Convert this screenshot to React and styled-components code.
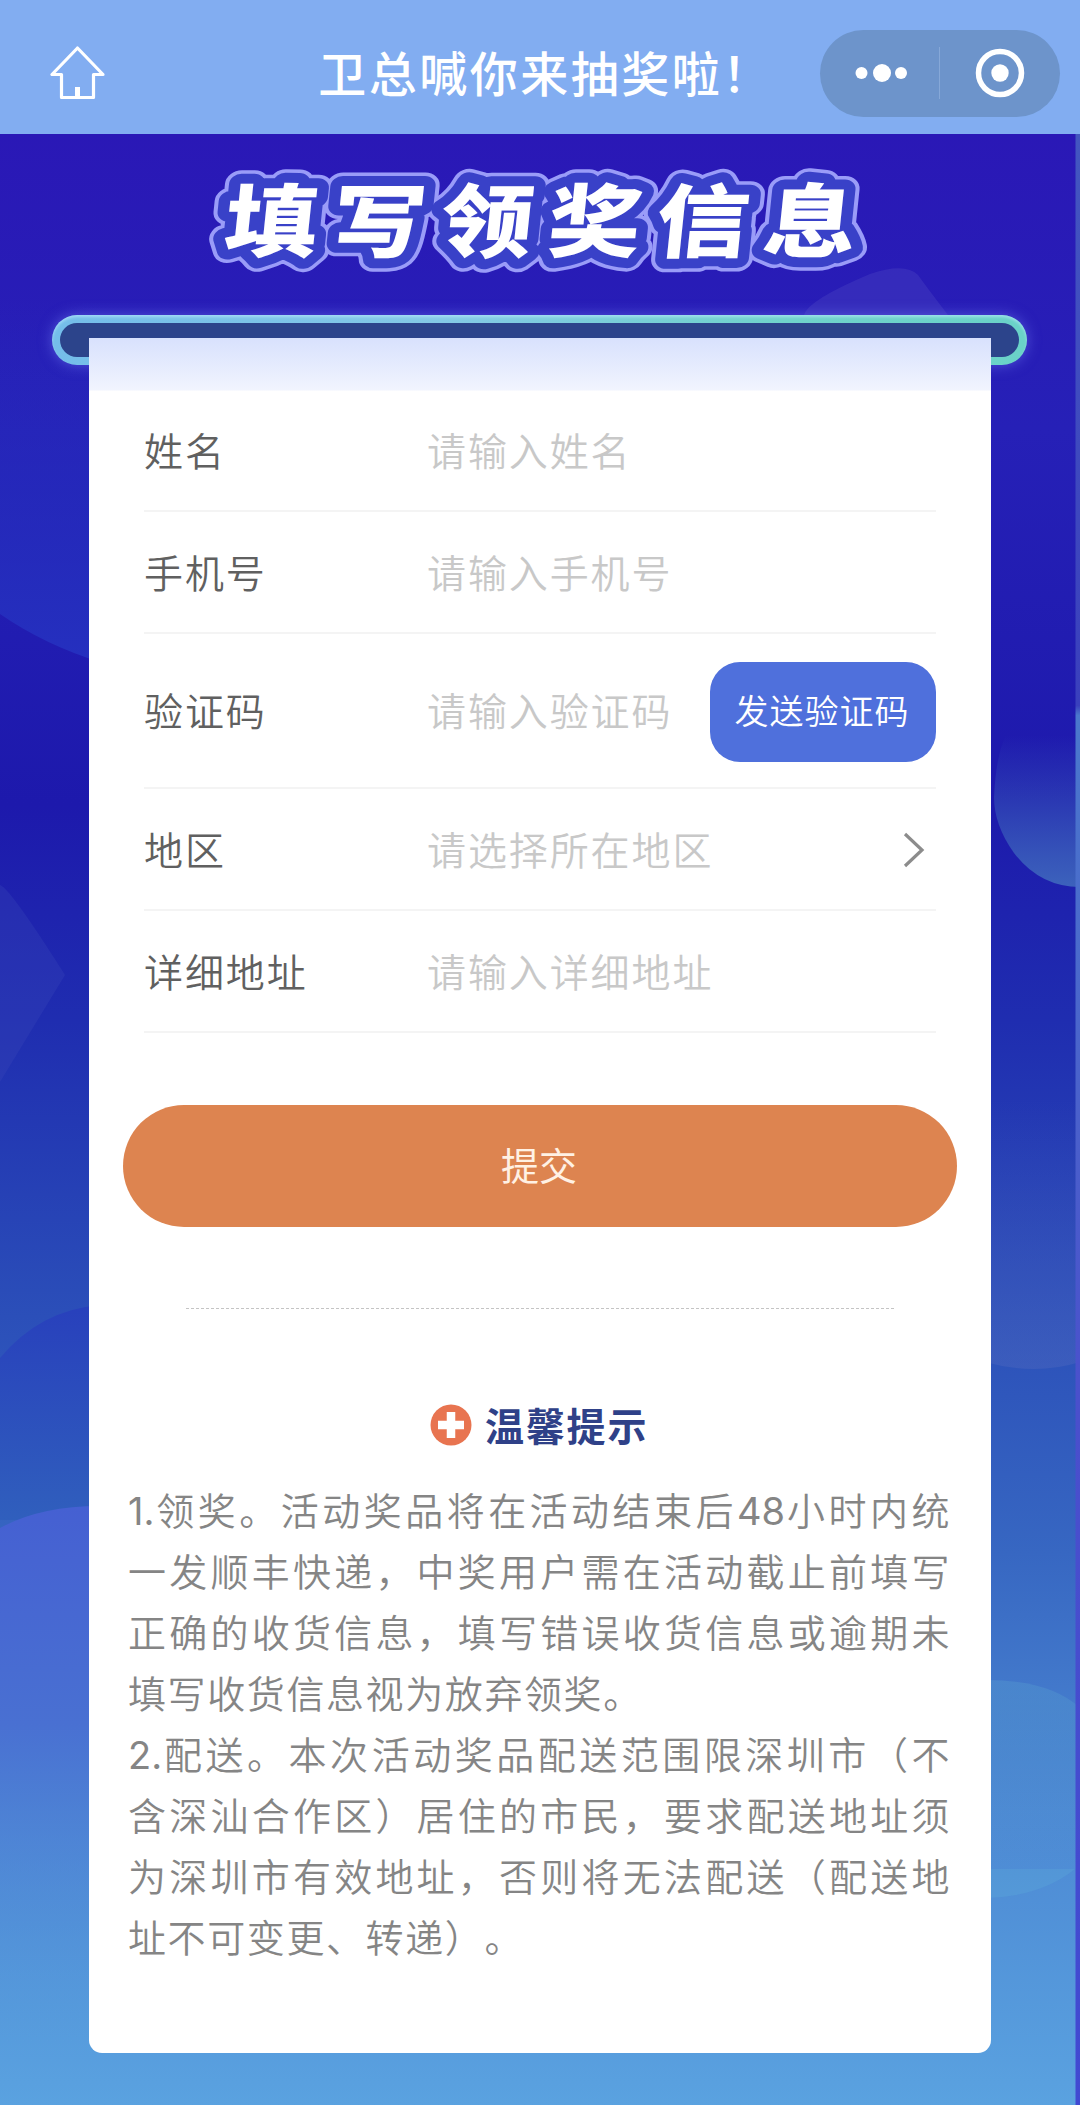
import React from 'react';
import styled, { createGlobalStyle } from 'styled-components';

const GlobalStyle = createGlobalStyle`
    body {
        margin : 0;
        font-family : "Noto Sans CJK SC", sans-serif;
    }

    * {
        box-sizing : border-box;
    }
`;

const Page = styled.div`
    position : relative;
    width : 1080px;
    height : 2105px;
    overflow : hidden;
    background : #2a1ab6;
`;

const Backdrop = styled.svg`
    position : absolute;
    top : 134px;
    left : 0;
`;

const Header = styled.header`
    position : relative;
    display : flex;
    align-items : center;
    justify-content : space-between;
    height : 134px;
    padding : 12px 20px 0 50px;
    background : #82adf1;
`;

const HeaderTitle = styled.h1`
    margin : 0 0 4px 166px;
    color : white;
    font-size : 48px;
    font-weight : 500;
    line-height : 60px;
    letter-spacing : 2.5px;
    white-space : nowrap;
`;

const Capsule = styled.div`
    display : flex;
    align-items : center;
    width : 240px;
    height : 87px;
    border-radius : 44px;
    background : #6d94cb;
`;

const CapsuleHalf = styled.div`
    display : flex;
    flex : 1;
    align-items : center;
    justify-content : center;
    height : 52px;
`;

const CapsuleLine = styled.div`
    width : 1px;
    height : 52px;
    background : #86a8d8;
`;

const Banner = styled.svg`
    position : relative;
    display : block;
    width : 1080px;
    height : 181px;
`;

const Slot = styled.div`
    position : relative;
    width : 975px;
    height : 50px;
    margin-left : 52px;
    padding : 8px;
    border-radius : 25px;
    background : linear-gradient(90deg, #74bdea 0%, #84c9e6 40%, #70d3cb 75%, #6ad2c8 100%);
    box-shadow : 0 0 14px rgba(110, 120, 240, .6), inset 0 2px 3px rgba(190, 235, 255, .6);

    &::after {
        content : "";
        display : block;
        height : 34px;
        border-radius : 17px;
        background : #2c448b;
    }
`;

const Card = styled.main`
    position : relative;
    display : flex;
    flex-direction : column;
    width : 902px;
    height : 1715px;
    margin : -27px 0 0 89px;
    padding-top : 52px;
    border-radius : 0 0 13px 13px;
    background : linear-gradient(180deg, #d8e1fd 0px, #f1f4fe 52px, white 53px);
`;

const Form = styled.form`
    display : flex;
    flex-direction : column;
    width : 792px;
    margin-left : 55px;
`;

const Row = styled.label`
    display : flex;
    align-items : center;
    height : ${props => props.$tall ? '155px' : '122px'};
    border-bottom : 2px solid #f4f4f4;
    font-size : 39px;
    letter-spacing : 1.9px;
`;

const Label = styled.span`
    width : 283px;
    padding-bottom : 3px;
    color : #606060;
    font-weight : 350;
`;

const Placeholder = styled.span`
    flex : 1;
    padding-bottom : 3px;
    color : #c8c8c8;
    font-weight : 350;
    white-space : nowrap;
`;

const CodeButton = styled.button`
    width : 226px;
    height : 100px;
    margin-top : 2px;
    padding : 0 2px 4px 0;
    border : none;
    border-radius : 30px;
    background : #4f70dc;
    color : white;
    font-family : inherit;
    font-size : 34px;
    font-weight : 350;
    letter-spacing : 1px;
    white-space : nowrap;
`;

const Arrow = styled.svg`
    margin : 2px 11px 0 0;
`;

const SubmitButton = styled.button`
    width : 834px;
    height : 122px;
    margin : 72px 0 0 34px;
    padding : 0 2px 5px 0;
    border : none;
    border-radius : 61px;
    background : #dd8450;
    color : #fff1e4;
    font-family : inherit;
    font-size : 38px;
`;

const Divider = styled.hr`
    width : 708px;
    height : 0;
    margin : 81px 0 0 97px;
    border : none;
    border-top : 1px dashed #c4c4c4;
`;

const TipHeader = styled.div`
    display : flex;
    align-items : center;
    height : 60px;
    margin : 86px 0 0 341px;
`;

const TipTitle = styled.h2`
    margin : 0 0 3px 13px;
    color : #2f4188;
    font-size : 39px;
    font-weight : 700;
    line-height : 60px;
    letter-spacing : 1.8px;
`;

const Tips = styled.div`
    width : 823px;
    margin : 26px 0 0 39px;
    color : #858585;
    font-family : Inter, "Noto Sans CJK SC", sans-serif;
    font-size : 38px;
    font-weight : 350;
    line-height : 61px;
    letter-spacing : 1.6px;
    text-spacing-trim : space-all;
`;

const TipLine = styled.div`
    height : 61px;
    text-align : justify;
    text-align-last : ${props => props.$end ? 'left' : 'justify'};
    white-space : nowrap;
`;

// tighter, slightly heavier numerals
const Digits = styled.span`
    font-weight : 400;
    letter-spacing : 0;
`;

const tips = [
    { text : '1.领奖。活动奖品将在活动结束后48小时内统' },
    { text : '一发顺丰快递，中奖用户需在活动截止前填写' },
    { text : '正确的收货信息，填写错误收货信息或逾期未' },
    { text : '填写收货信息视为放弃领奖。', end : true },
    { text : '2.配送。本次活动奖品配送范围限深圳市（不' },
    { text : '含深汕合作区）居住的市民，要求配送地址须' },
    { text : '为深圳市有效地址，否则将无法配送（配送地' },
    { text : '址不可变更、转递）。', end : true },
];

const renderTip = text => text.split(/([\d.]+)/).map((part, i) => (
    i % 2 ? <Digits key={i}>{part}</Digits> : part
));

const Background = () => (
    <Backdrop width="1080" height="1971" viewBox="0 134 1080 1971">
        <defs>
            <linearGradient id="sky" gradientUnits="userSpaceOnUse" x1="0" y1="134" x2="0" y2="2105">
                <stop offset="0" stopColor="#2a18b6"/>
                <stop offset=".15" stopColor="#2620b7"/>
                <stop offset=".34" stopColor="#1d19ac"/>
                <stop offset=".45" stopColor="#1f2db0"/>
                <stop offset=".6" stopColor="#2b4fb9"/>
                <stop offset=".72" stopColor="#3767c2"/>
                <stop offset=".85" stopColor="#4c88d3"/>
                <stop offset="1" stopColor="#5aa2e0"/>
            </linearGradient>
            <linearGradient id="orb" gradientUnits="userSpaceOnUse" x1="0" y1="735" x2="0" y2="887">
                <stop offset="0" stopColor="#3c62bc" stopOpacity="0"/>
                <stop offset="1" stopColor="#3c62bc"/>
            </linearGradient>
            <linearGradient id="hill" x1="0" y1="0" x2="0" y2="1">
                <stop offset="0" stopColor="#4560d2"/>
                <stop offset=".4" stopColor="#4970d2"/>
                <stop offset="1" stopColor="#58a0dc" stopOpacity="0"/>
            </linearGradient>
            <linearGradient id="wave" x1="0" y1="0" x2="0" y2="1">
                <stop offset="0" stopColor="#2840bc"/>
                <stop offset="1" stopColor="#305fbd"/>
            </linearGradient>
            <linearGradient id="shade" x1="0" y1="0" x2="0" y2="1">
                <stop offset="0" stopColor="#2530bf" stopOpacity="0"/>
                <stop offset="1" stopColor="#2530bf"/>
            </linearGradient>
            <linearGradient id="dusk" x1="0" y1="0" x2="0" y2="1">
                <stop offset="0" stopColor="#5069bf" stopOpacity="0"/>
                <stop offset="1" stopColor="#5069bf" stopOpacity=".4"/>
            </linearGradient>
            <linearGradient id="mist" x1="0" y1="0" x2="0" y2="1">
                <stop offset="0" stopColor="#58a0d0" stopOpacity=".35"/>
                <stop offset="1" stopColor="#58a0d0" stopOpacity="0"/>
            </linearGradient>
            <linearGradient id="edge" gradientUnits="userSpaceOnUse" x1="0" y1="134" x2="0" y2="2105">
                <stop offset="0" stopColor="#4356c0"/>
                <stop offset=".29" stopColor="#3a40bd"/>
                <stop offset=".295" stopColor="#4a78cc"/>
                <stop offset=".5" stopColor="#4a60cb"/>
                <stop offset=".65" stopColor="#4a4fcc"/>
                <stop offset="1" stopColor="#4149d2"/>
            </linearGradient>
        </defs>
        <rect y="134" width="1080" height="1971" fill="url(#sky)"/>
        <path d="M0 300H100V662Q45 645 0 614Z" fill="url(#shade)"/>
        <path d="M0 885Q10 888 65 975L0 1082Z" fill="#3b49b8" opacity=".3"/>
        <path d="M0 1358Q40 1310 100 1305V1520H0Z" fill="url(#wave)"/>
        <path d="M0 1528Q40 1506 100 1506V2050H0Z" fill="url(#hill)"/>
        <path d="M804 315Q808 300 870 274Q905 262 918 275Q925 285 948 315Z" fill="#5550c8" opacity=".3"/>
        <path d="M1006 735H1080V887Q1040 887 1014 853Q994 825 994 797Q996 755 1006 735Z" fill="url(#orb)"/>
        <path d="M985 1100H1080V1362Q1035 1376 985 1362Z" fill="url(#dusk)"/>
        <path d="M985 1680Q1050 1680 1080 1708V1869H985Z" fill="url(#mist)"/>
        <path d="M985 1869H1075Q1040 1897 985 1898Z" fill="#60b4dc" opacity=".25"/>
        <rect x="1075.5" y="134" width="4.5" height="1971" fill="url(#edge)"/>
    </Backdrop>
);

const HomeIcon = () => (
    <svg width="55" height="54" viewBox="0 0 55 54" fill="none" stroke="white" strokeWidth="3.2" strokeLinejoin="round">
        <path d="M27.5 2L2 28.5H11.5V51.5H43.5V28.5H53Z"/>
        <path d="M27.5 41V51" strokeWidth="5"/>
    </svg>
);

const bannerText = {
    fontSize : 80,
    fontWeight : 900,
    textAnchor : 'start',
};

const BannerTitle = () => (
    <Banner viewBox="0 0 1080 181">
        <g transform="translate(222 117) skewX(-6) scale(1.16 1)" letterSpacing="13" strokeLinejoin="round" {...bannerText}>
            <text fill="#9a9cf8" stroke="#9a9cf8" strokeWidth="27" aria-hidden="true">填写领奖信息</text>
            <text fill="white" stroke="#3941c8" strokeWidth="20" paintOrder="stroke">填写领奖信息</text>
        </g>
    </Banner>
);

const App = () => {
    return (
        <Page lang="zh-CN">
            <GlobalStyle/>
            <Background/>
            <Header>
                <HomeIcon/>
                <HeaderTitle>卫总喊你来抽奖啦！</HeaderTitle>
                <Capsule>
                    <CapsuleHalf>
                        <svg width="54" height="20" fill="white">
                            <circle cx="8.5" cy="10" r="6"/>
                            <circle cx="29" cy="10" r="9"/>
                            <circle cx="48" cy="10" r="6"/>
                        </svg>
                    </CapsuleHalf>
                    <CapsuleLine/>
                    <CapsuleHalf>
                        <svg width="50" height="50">
                            <circle cx="25" cy="25" r="21.5" fill="none" stroke="white" strokeWidth="5.5"/>
                            <circle cx="25" cy="25" r="8.7" fill="white"/>
                        </svg>
                    </CapsuleHalf>
                </Capsule>
            </Header>
            <BannerTitle/>
            <Slot/>
            <Card>
                <Form>
                    <Row>
                        <Label>姓名</Label>
                        <Placeholder>请输入姓名</Placeholder>
                    </Row>
                    <Row>
                        <Label>手机号</Label>
                        <Placeholder>请输入手机号</Placeholder>
                    </Row>
                    <Row $tall>
                        <Label>验证码</Label>
                        <Placeholder>请输入验证码</Placeholder>
                        <CodeButton type="button">发送验证码</CodeButton>
                    </Row>
                    <Row>
                        <Label>地区</Label>
                        <Placeholder>请选择所在地区</Placeholder>
                        <Arrow width="22" height="36" fill="none" stroke="#8c8c8c" strokeWidth="3.2">
                            <path d="M2 2L19 18L2 34"/>
                        </Arrow>
                    </Row>
                    <Row>
                        <Label>详细地址</Label>
                        <Placeholder>请输入详细地址</Placeholder>
                    </Row>
                </Form>
                <SubmitButton type="button">提交</SubmitButton>
                <Divider/>
                <TipHeader>
                    <svg width="42" height="42">
                        <circle cx="21" cy="21" r="20.5" fill="#e87450"/>
                        <path d="M21 8V34M8 21H34" stroke="white" strokeWidth="8.5"/>
                    </svg>
                    <TipTitle>温馨提示</TipTitle>
                </TipHeader>
                <Tips>
                    {tips.map(({ text, end }) => (
                        <TipLine key={text} $end={end}>{renderTip(text)}</TipLine>
                    ))}
                </Tips>
            </Card>
        </Page>
    );
};

export default App;
